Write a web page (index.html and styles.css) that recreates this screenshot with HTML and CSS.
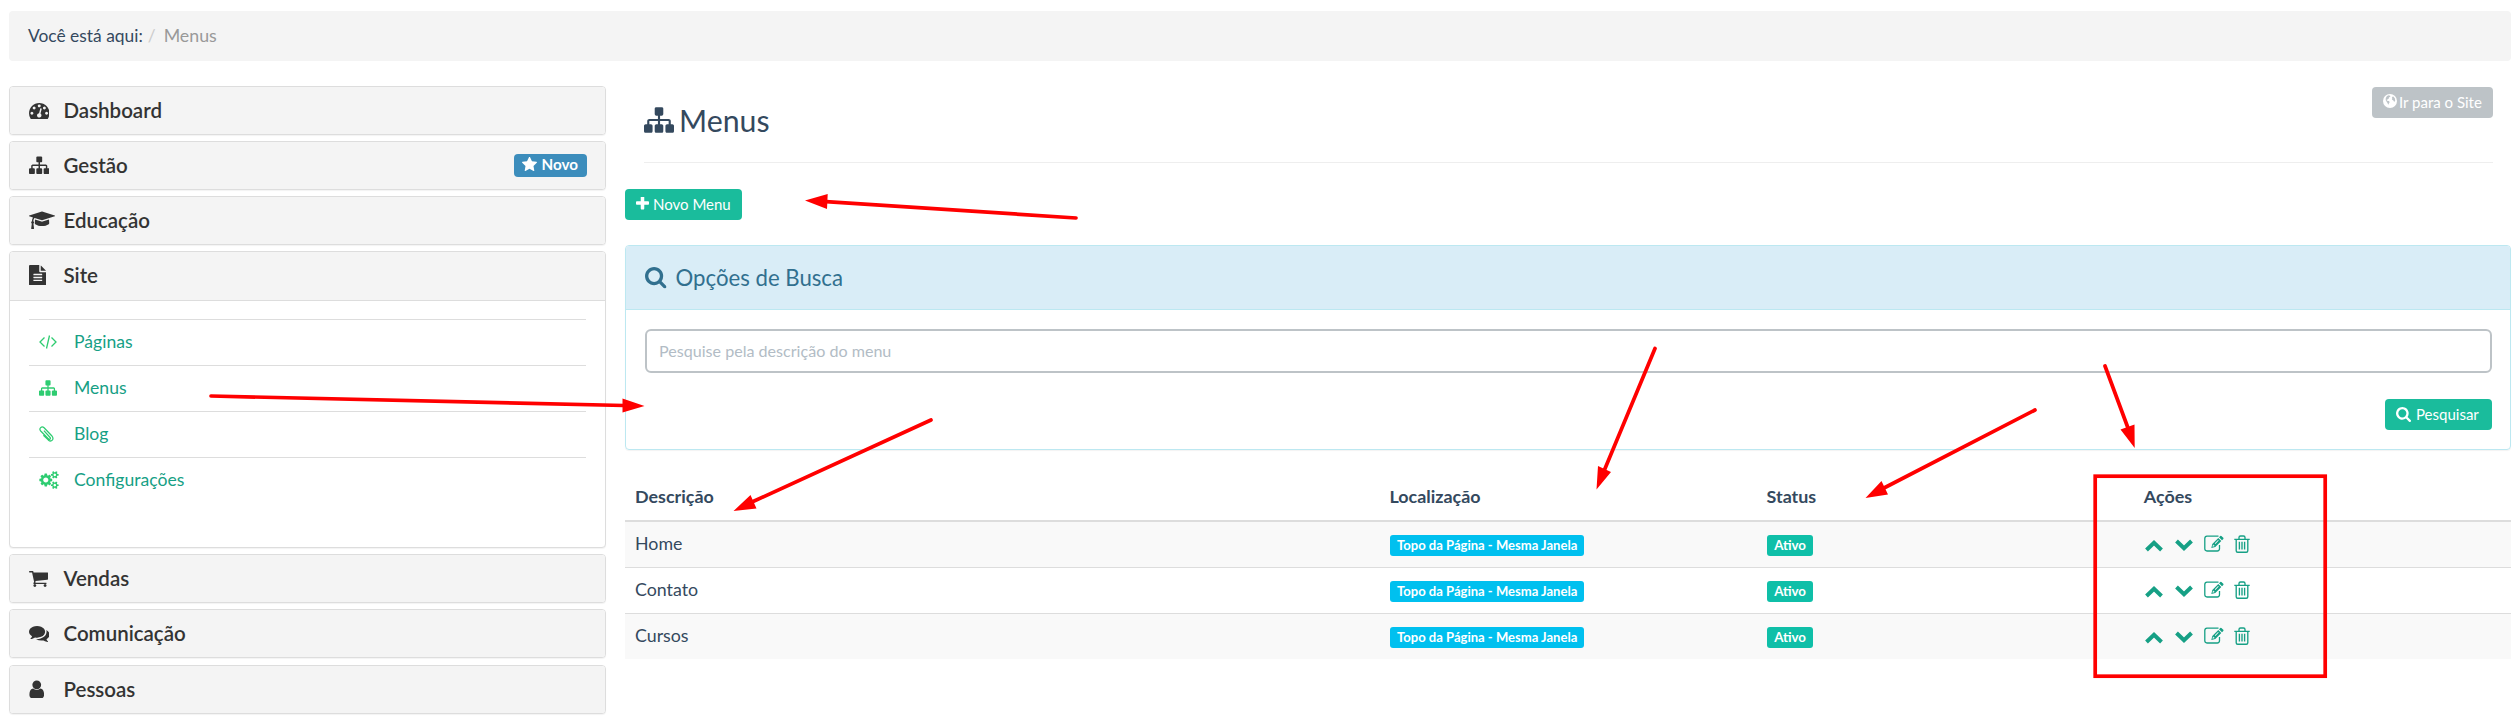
FILE: index.html
```html
<!DOCTYPE html>
<html lang="pt-BR">
<head>
<meta charset="utf-8">
<title>Menus</title>
<link rel="stylesheet" href="styles.css">
</head>
<body>
<svg class="sprite" aria-hidden="true">
  <symbol id="sitemap" viewBox="0 0 1792 1792"><path d="M1792 1248v320q0 40-28 68t-68 28h-320q-40 0-68-28t-28-68v-320q0-40 28-68t68-28h96v-192h-512v192h96q40 0 68 28t28 68v320q0 40-28 68t-68 28h-320q-40 0-68-28t-28-68v-320q0-40 28-68t68-28h96v-192h-512v192h96q40 0 68 28t28 68v320q0 40-28 68t-68 28h-320q-40 0-68-28t-28-68v-320q0-40 28-68t68-28h96v-192q0-52 38-90t90-38h512v-192h-96q-40 0-68-28t-28-68v-320q0-40 28-68t68-28h320q40 0 68 28t28 68v320q0 40-28 68t-68 28h-96v192h512q52 0 90 38t38 90v192h96q40 0 68 28t28 68z"/></symbol>
  <symbol id="gauge" viewBox="0 0 1792 1792"><path d="M384 1152q0-53-37.500-90.500t-90.500-37.500-90.500 37.500-37.500 90.500 37.500 90.500 90.500 37.500 90.500-37.500 37.500-90.500zm192-448q0-53-37.500-90.500t-90.500-37.500-90.500 37.500-37.500 90.500 37.500 90.500 90.500 37.500 90.500-37.500 37.500-90.500zm428 481l101-382q6-26-7.500-48.500t-38.500-29.500-48 6.500-30 39.500l-101 382q-60 5-107 43.500t-63 98.500q-20 77 20 146t117 89 146-20 89-117q16-60-6-117t-72-91zm660-33q0-53-37.500-90.500t-90.500-37.500-90.500 37.500-37.500 90.500 37.500 90.500 90.500 37.500 90.500-37.500 37.500-90.500zm-640-640q0-53-37.500-90.500t-90.500-37.500-90.500 37.500-37.500 90.500 37.500 90.500 90.500 37.500 90.500-37.500 37.500-90.500zm448 192q0-53-37.500-90.500t-90.500-37.500-90.500 37.500-37.500 90.500 37.500 90.500 90.500 37.500 90.500-37.500 37.500-90.500zm320 448q0 261-141 483-19 29-54 29h-1402q-35 0-54-29-141-221-141-483 0-182 71-348t191-286 286-191 348-71 348 71 286 191 191 286 71 348z"/></symbol>
  <symbol id="cap" viewBox="0 0 2304 1792"><path d="M1774 836l18 316q4 69-82 128t-235 93.500-323 34.500-323-34.500-235-93.500-82-128l18-316 574 181q22 7 48 7t48-7zm530-324q0 23-22 31l-1120 352q-4 1-10 1t-10-1l-652-206q-43 34-71 111.500t-34 178.500q63 36 63 109 0 69-58 107l58 433q2 14-8 25-9 11-24 11h-192q-15 0-24-11-10-11-8-25l58-433q-58-38-58-107 0-73 65-111 11-207 98-330l-333-104q-22-8-22-31t22-31l1120-352q4-1 10-1t10 1l1120 352q22 8 22 31z"/></symbol>
  <symbol id="file" viewBox="128 0 1536 1792"><path d="M1596 476q14 14 28 36h-472v-472q22 14 36 28zm-476 164h544v1056q0 40-28 68t-68 28h-1344q-40 0-68-28t-28-68v-1600q0-40 28-68t68-28h800v544q0 40 28 68t68 28zm160 736v-64q0-14-9-23t-23-9h-704q-14 0-23 9t-9 23v64q0 14 9 23t23 9h704q14 0 23-9t9-23zm0-256v-64q0-14-9-23t-23-9h-704q-14 0-23 9t-9 23v64q0 14 9 23t23 9h704q14 0 23-9t9-23zm0-256v-64q0-14-9-23t-23-9h-704q-14 0-23 9t-9 23v64q0 14 9 23t23 9h704q14 0 23-9t9-23z"/></symbol>
  <symbol id="cart" viewBox="64 0 1664 1792"><path d="M704 1536q0 52-38 90t-90 38-90-38-38-90 38-90 90-38 90 38 38 90zm896 0q0 52-38 90t-90 38-90-38-38-90 38-90 90-38 90 38 38 90zm128-1088v512q0 24-16.500 42.500t-40.500 21.500l-1044 122q13 60 13 70 0 16-24 64h920q26 0 45 19t19 45-19 45-45 19h-1024q-26 0-45-19t-19-45q0-11 8-31.500t16-36 21.500-40 15.500-29.500l-177-823h-204q-26 0-45-19t-19-45 19-45 45-19h256q16 0 28.500 6.500t19.500 15.500 13 24.500 8 26 5.500 29.500 4.500 26h1201q26 0 45 19t19 45z"/></symbol>
  <symbol id="comments" viewBox="0 0 1792 1792"><path d="M1408 768q0 139-94 257t-256.500 186.500-353.500 68.500q-86 0-176-16-124 88-278 128-36 9-86 16h-3q-11 0-20.500-8t-11.500-21q-1-3-1-6.500t.5-6.500 2-6l2.500-5 3.500-5.500 4-5 4.500-5 4-4.500q5-6 23-25t26-29.500 22.500-29 25-38.500 20.500-44q-124-72-195-177t-71-224q0-139 94-257t256.500-186.500 353.500-68.500 353.500 68.500 256.500 186.500 94 257zm384 256q0 120-71 224.500t-195 176.500q10 24 20.500 44t25 38.500 22.500 29 26 29.500 23 25q1 1 4 4.500t4.500 5 4 5 3.500 5.500l2.500 5 2 6 .5 6.500-1 6.500q-3 14-13 22t-22 7q-50-7-86-16-154-40-278-128-90 16-176 16-271 0-472-132 58 4 88 4 161 0 309-45t264-129q125-92 192-212t67-254q0-77-23-152 129 71 204 178t75 230z"/></symbol>
  <symbol id="user" viewBox="256 0 1280 1792"><path d="M1536 1399q0 109-62.500 187t-150.500 78h-854q-88 0-150.500-78t-62.500-187q0-85 8.500-160.500t31.500-152 58.500-131 94-89 134.500-34.500q131 128 313 128t313-128q76 0 134.500 34.500t94 89 58.500 131 31.500 152 8.500 160.500zm-256-887q0 159-112.500 271.500t-271.500 112.500-271.500-112.500-112.500-271.500 112.500-271.500 271.500-112.500 271.500 112.500 112.500 271.500z"/></symbol>
  <symbol id="star" viewBox="64 64 1664 1664"><path d="M1728 647q0 22-26 48l-363 354 86 500q1 7 1 20 0 21-10.500 35.500t-30.500 14.500q-19 0-40-12l-449-236-449 236q-22 12-40 12-21 0-31.500-14.500t-10.500-35.500q0-6 2-20l86-500-364-354q-25-27-25-48 0-37 56-46l502-73 225-455q19-41 49-41t49 41l225 455 502 73q56 9 56 46z"/></symbol>
  <symbol id="plus" viewBox="192 192 1408 1408"><path d="M1600 736v192q0 40-28 68t-68 28h-416v416q0 40-28 68t-68 28h-192q-40 0-68-28t-28-68v-416h-416q-40 0-68-28t-28-68v-192q0-40 28-68t68-28h416v-416q0-40 28-68t68-28h192q40 0 68 28t28 68v416h416q40 0 68 28t28 68z"/></symbol>
  <symbol id="search" viewBox="64 128 1664 1664"><path d="M1216 832q0-185-131.500-316.500t-316.500-131.500-316.500 131.500-131.500 316.500 131.500 316.500 316.500 131.500 316.500-131.500 131.500-316.500zm512 832q0 52-38 90t-90 38q-54 0-90-38l-343-342q-179 124-399 124-143 0-273.500-55.500t-225-150-150-225-55.500-273.500 55.500-273.500 150-225 225-150 273.500-55.500 273.500 55.500 225 150 150 225 55.500 273.500q0 220-124 399l343 343q37 37 37 90z"/></symbol>
  <symbol id="cogs" viewBox="0 0 1920 1792"><path d="M896 896q0-106-75-181t-181-75-181 75-75 181 75 181 181 75 181-75 75-181zm768 512q0-52-38-90t-90-38-90 38-38 90q0 53 37.500 90.500t90.500 37.500 90.500-37.500 37.500-90.500zm0-1024q0-52-38-90t-90-38-90 38-38 90q0 53 37.500 90.500t90.500 37.500 90.500-37.500 37.500-90.500zm-384 421v185q0 10-7 19.500t-16 10.500l-155 24q-11 35-32 76 34 48 90 115 7 11 7 20 0 12-7 19-23 30-82.500 89.500t-78.500 59.500q-11 0-21-7l-115-90q-37 19-77 31-11 108-23 155-7 24-30 24h-186q-11 0-20-7.500t-10-17.500l-23-153q-34-10-75-31l-118 89q-7 7-20 7-11 0-21-8-144-133-144-160 0-9 7-19 10-14 41-53t47-61q-23-44-35-82l-152-24q-10-1-17-9.500t-7-19.500v-185q0-10 7-19.500t16-10.500l155-24q11-35 32-76-34-48-90-115-7-11-7-20 0-12 7-20 22-30 82-89t79-59q11 0 21 7l115 90q34-18 77-32 11-108 23-154 7-24 30-24h186q11 0 20 7.500t10 17.500l23 153q34 10 75 31l118-89q8-7 20-7 11 0 21 8 144 133 144 160 0 8-7 19-12 16-42 54t-45 60q23 48 34 82l152 23q10 2 17 10.500t7 19.500zm640 533v140q0 16-149 31-12 27-30 52 51 113 51 138 0 4-4 7-122 71-124 71-8 0-46-47t-52-68q-20 2-30 2t-30-2q-14 21-52 68t-46 47q-2 0-124-71-4-3-4-7 0-25 51-138-18-25-30-52-149-15-149-31v-140q0-16 149-31 13-29 30-52-51-113-51-138 0-4 4-7 4-2 35-20t59-34 30-16q8 0 46 46.500t52 67.500q20-2 30-2t30 2q51-71 92-112l6-2q4 0 124 70 4 3 4 7 0 25-51 138 17 23 30 52 149 15 149 31zm0-1024v140q0 16-149 31-12 27-30 52 51 113 51 138 0 4-4 7-122 71-124 71-8 0-46-47t-52-68q-20 2-30 2t-30-2q-14 21-52 68t-46 47q-2 0-124-71-4-3-4-7 0-25 51-138-18-25-30-52-149-15-149-31v-140q0-16 149-31 13-29 30-52-51-113-51-138 0-4 4-7 4-2 35-20t59-34 30-16q8 0 46 46.500t52 67.500q20-2 30-2t30 2q51-71 92-112l6-2q4 0 124 70 4 3 4 7 0 25-51 138 17 23 30 52 149 15 149 31z"/></symbol>
  <symbol id="code" viewBox="0 0 18 18"><path d="M5.500 4.500L1 9l4.500 4.500M12.500 4.500L17 9l-4.500 4.500M10.500 2.500l-3 13" fill="none" stroke="currentColor" stroke-width="1.300"/></symbol>
  <symbol id="clip" viewBox="0 0 18 18"><path d="M5.500 5.500l6 6.500c1.300 1.300-.3 2.900-1.600 1.600L2.300 5.800C.2 3.400 3.200.2 5.700 2.500l7.600 8c3 3.500-.3 6.900-3.500 4.200L5 10" fill="none" stroke="currentColor" stroke-width="1.250" transform="translate(-.6 .2)"/></symbol>
  <symbol id="globe" viewBox="0 0 14 14"><path fill-rule="evenodd" d="M7 0a7 7 0 1 0 0 14A7 7 0 0 0 7 0zM4 2l1.800-.7 1.700.6-.6 1.200-1.100.4.200.8-1.500 1.300-.9.200.5.900 1.700.4.900 1-.8 1.500-.7 1.200-.7-1.700-1-1.500-.8-1.500.1-2zM8.800 3l1.500-.6 1.500 1.800.4 2.200-1 1.700-.8-1.700-1.500-.8.400-1.600z"/></symbol>
  <symbol id="up" viewBox="0 0 18 13"><path d="M1.500 11L9 3.800l7.500 7.200" fill="none" stroke="currentColor" stroke-width="4"/></symbol>
  <symbol id="down" viewBox="0 0 18 13"><path d="M1.500 2L9 9.200 16.500 2" fill="none" stroke="currentColor" stroke-width="4"/></symbol>
  <symbol id="edit" viewBox="0 0 20 18"><path d="M14.500 1.200H3A2.300 2.300 0 0 0 .8 3.400v10.400A2.300 2.300 0 0 0 3 16h10.200a2.300 2.300 0 0 0 2.300-2.200V10" fill="none" stroke="currentColor" stroke-width="1.300"/><path fill-rule="evenodd" d="M7.300 12.900l1-4 6-6 3 3-6 6zM8.900 10l-.4 1.700 1.800-.4.300-.8-.9.100.1-.8zM10.800 8.300l.6.600 3.300-3.300-.6-.6zM15 2.200l1.300-1.300q.5-.5 1.100 0l1.900 1.800q.5.600 0 1.200L18 5.200z"/></symbol>
  <symbol id="trash" viewBox="0 0 16 18"><path d="M.3 4.300h15.400M5 4V2.500Q5 1 6.500 1h3Q11 1 11 2.500V4M2.200 4.500v11.200q0 1.500 1.500 1.500h8.600q1.500 0 1.500-1.500V4.500M5.400 6.700v7.800M8 6.700v7.800M10.600 6.700v7.800" fill="none" stroke="currentColor" stroke-width="1.350"/></symbol>
</svg>

<nav class="breadcrumb"><span>Você está aqui:</span><span class="sep">/</span><span class="current">Menus</span></nav>

<div class="layout">
  <aside class="sidebar">
    <section class="box"><h4><span class="slot"><svg class="i20"><use href="#gauge"/></svg></span>Dashboard</h4></section>
    <section class="box"><h4><span class="slot"><svg class="i20"><use href="#sitemap"/></svg></span>Gestão<span class="badge"><svg><use href="#star"/></svg>Novo</span></h4></section>
    <section class="box"><h4><span class="slot"><svg class="i20 wide"><use href="#cap"/></svg></span>Educação</h4></section>
    <section class="box open"><h4><span class="slot"><svg class="i20 file"><use href="#file"/></svg></span>Site</h4>
      <ul class="links">
        <li><span class="slot"><svg><use href="#code"/></svg></span>Páginas</li>
        <li><span class="slot"><svg><use href="#sitemap"/></svg></span>Menus</li>
        <li><span class="slot"><svg><use href="#clip"/></svg></span>Blog</li>
        <li><span class="slot"><svg class="cogs"><use href="#cogs"/></svg></span>Configurações</li>
      </ul>
    </section>
    <section class="box"><h4><span class="slot"><svg class="i20 cart"><use href="#cart"/></svg></span>Vendas</h4></section>
    <section class="box"><h4><span class="slot"><svg class="i20"><use href="#comments"/></svg></span>Comunicação</h4></section>
    <section class="box last"><h4><span class="slot"><svg class="i20 user"><use href="#user"/></svg></span>Pessoas</h4></section>
  </aside>

  <main class="content">
    <header class="page-header">
      <h1><svg><use href="#sitemap"/></svg>Menus</h1>
      <a class="btn muted"><svg class="globe"><use href="#globe"/></svg>Ir para o Site</a>
    </header>
    <a class="btn new"><svg class="plus"><use href="#plus"/></svg>Novo Menu</a>

    <section class="panel">
      <h3><svg><use href="#search"/></svg>Opções de Busca</h3>
      <div class="panel-body">
        <input type="text" placeholder="Pesquise pela descrição do menu">
        <a class="btn find"><svg><use href="#search"/></svg>Pesquisar</a>
      </div>
    </section>

    <table>
      <thead><tr><th class="c40">Descrição</th><th class="c20">Localização</th><th class="c20">Status</th><th class="c20">Ações</th></tr></thead>
      <tbody>
        <tr><td>Home</td><td><span class="label info">Topo da Página - Mesma Janela</span></td><td><span class="label ok">Ativo</span></td><td><div class="actions"><svg class="chev"><use href="#up"/></svg><svg class="chev dn"><use href="#down"/></svg><svg class="edit"><use href="#edit"/></svg><svg class="trash"><use href="#trash"/></svg></div></td></tr>
        <tr><td>Contato</td><td><span class="label info">Topo da Página - Mesma Janela</span></td><td><span class="label ok">Ativo</span></td><td><div class="actions"><svg class="chev"><use href="#up"/></svg><svg class="chev dn"><use href="#down"/></svg><svg class="edit"><use href="#edit"/></svg><svg class="trash"><use href="#trash"/></svg></div></td></tr>
        <tr><td>Cursos</td><td><span class="label info">Topo da Página - Mesma Janela</span></td><td><span class="label ok">Ativo</span></td><td><div class="actions"><svg class="chev"><use href="#up"/></svg><svg class="chev dn"><use href="#down"/></svg><svg class="edit"><use href="#edit"/></svg><svg class="trash"><use href="#trash"/></svg></div></td></tr>
      </tbody>
    </table>
  </main>
</div>

<svg class="marks" viewBox="0 0 2520 728">
  <path class="shaft" d="M1076 218L826 201.700M211 396L624 405.500M931 420L752 502M1655 348.500L1604 471M2105 366L2128 428M2035 410L1884 488"/>
  <path class="head" d="M805 200.500l22.700-6.500-.7 15zM644.500 406l-22-7.500v14zM733.500 511l17-16 6 13.500zM1596.500 489.500l1.500-23.500 13 6zM2134.700 448l-14.200-18.500 14-5zM1865.500 498l16-17 6.500 13.500z"/>
  <rect class="frame" x="2095.200" y="476.200" width="230" height="200"/>
</svg>
</body>
</html>
```
FILE: styles.css
```css
* { box-sizing: border-box; }
body {
  margin: 0;
  padding: 11px 9px 0;
  height: 728px;
  overflow: hidden;
  position: relative;
  font: 17.4px/29px Lato, "Open Sans", sans-serif;
  color: #34495e;
  background: #fff;
}
svg { display: block; flex: none; fill: currentColor; }
.sprite { display: none; }
h1, h3, h4, ul { margin: 0; padding: 0; font-weight: 400; }

.breadcrumb {
  display: flex;
  height: 50px;
  padding: 10px 19px;
  border-radius: 4px;
  background: #f4f4f4;
}
.sep { padding: 0 8px 0 5px; color: #ccc; }
.current { color: #999; font-size: 17.8px; }

.layout { display: flex; gap: 19px; padding-top: 25px; }

.sidebar { width: 597px; display: flex; flex-direction: column; gap: 6px; }
.box {
  height: 49px;
  border: 1px solid #ddd;
  border-radius: 4px;
  box-shadow: 0 1px 1px rgba(0, 0, 0, .05);
  background: #fff;
  overflow: hidden;
}
.box.open { height: 297px; }
.box.last { margin-top: 1px; }
.box h4 {
  display: flex;
  align-items: center;
  height: 48px;
  padding: 0 18px 2px 18.500px;
  font-size: 20.5px;
  font-weight: 600;
  color: #333;
  background: #f4f4f4;
}
.box.open h4 { height: 49px; border-bottom: 1px solid #ddd; }
.box .slot { width: 35px; flex: none; }
.i20 { width: 20.5px; height: 20.5px; }
.i20.wide { width: 26px; }
.i20.file { width: 17.6px; }
.i20.cart { width: 19px; }
.i20.user { width: 15.5px; }
.badge {
  display: flex;
  align-items: center;
  gap: 5px;
  margin-left: auto;
  height: 23px;
  padding: 0 9px 1px 8px;
  border-radius: 4px;
  background: #3c8dbc;
  color: #fff;
  font-size: 15.2px;
  font-weight: 700;
}
.badge svg { width: 15px; height: 15px; }
.links { list-style: none; margin: 18px 19px 0; }
.links li {
  display: flex;
  align-items: center;
  height: 46px;
  padding-left: 9.500px;
  padding-bottom: 2px;
  border-top: 1px solid #ddd;
  font-size: 17.6px;
  color: #16a085;
}
.links .slot { width: 35.500px; color: #2ecc71; }
.links svg { width: 18px; height: 18px; }
.links .cogs { width: 20px; }

.content { width: 1886px; }
.page-header {
  display: flex;
  justify-content: space-between;
  align-items: flex-start;
  height: 77px;
  margin: 0 18px 26px 19px;
  border-bottom: 1px solid #eee;
}
h1 { display: flex; align-items: center; gap: 5px; padding-top: 14px; font-size: 30.3px; line-height: 40px; }
h1 svg { width: 30px; height: 30px; }
.btn {
  display: flex;
  align-items: center;
  height: 31px;
  padding: 0 0 1px 11px;
  border-radius: 4px;
  background: #1abc9c;
  color: #fff;
  font-size: 15px;
  white-space: nowrap;
}
.btn.muted { width: 121px; margin-top: 1px; background: #bdc3c7; }
.btn .globe { width: 14px; height: 14px; margin: -2px 2px 0 0; }
.btn .plus { width: 13px; height: 13px; margin: -1px 4px 0 0; }
.btn.new { width: 117px; }
.btn.find { width: 107px; }
.find svg { width: 15px; height: 15px; margin-right: 5px; }

.panel {
  height: 205px;
  margin-top: 25px;
  border: 1px solid #bce8f1;
  border-radius: 4px;
  box-shadow: 0 1px 1px rgba(0, 0, 0, .05);
  overflow: hidden;
}
.panel h3 {
  display: flex;
  align-items: center;
  gap: 9px;
  height: 64px;
  padding: 0 19px;
  border-bottom: 1px solid #bce8f1;
  background: #d9edf7;
  color: #31708f;
  font-size: 22.2px;
}
.panel h3 svg { width: 21.5px; height: 21.5px; margin-top: 1px; }
.panel-body { display: flex; flex-direction: column; align-items: flex-end; gap: 26px; padding: 19px 18px 0 19px; }
input {
  width: 100%;
  height: 44px;
  padding: 0 12px 2px;
  border: 2px solid #bdc3c7;
  border-radius: 6px;
  background: #fff;
  font: 16.1px Lato, sans-serif;
  outline: 0;
}
input::placeholder { color: #b2bcc5; opacity: 1; }

table { width: 100%; margin-top: 19px; border-collapse: separate; border-spacing: 0; table-layout: fixed; }
.c40 { width: 40%; }
.c20 { width: 20%; }
th { height: 53px; padding: 3px 10px 0; border-bottom: 2px solid #ddd; text-align: left; font-size: 17.9px; font-weight: 700; }
td { height: 46px; padding: 0 10px 2px; border-top: 1px solid #ddd; font-size: 17.8px; vertical-align: middle; }
tbody tr:first-child td { height: 45px; border-top: 0; }
tbody tr:nth-child(odd) { background: #f9f9f9; }
.label {
  display: flex;
  width: max-content;
  height: 21px;
  margin: 4px 0 0 .6px;
  padding: 0 7px;
  border-radius: 3px;
  line-height: 20px;
  font-size: 13.050px;
  font-weight: 700;
  color: #fff;
}
.info { background: #00c0ef; }
.ok { background: #0fbfa8; font-size: 13.300px; }
.actions { display: flex; align-items: flex-start; padding-left: 1px; color: #16a085; }
.chev { width: 18px; height: 13px; margin-top: 4px; }
.dn { margin-left: 12.500px; }
.edit { width: 20px; height: 18px; margin-left: 10.500px; }
.trash { width: 16px; height: 18px; margin-left: 10.500px; }

.marks { position: absolute; left: 0; top: 0; width: 2520px; height: 728px; pointer-events: none; }
.shaft { fill: none; stroke: #f00; stroke-width: 3.7; stroke-linecap: round; }
.head { fill: #f00; }
.frame { fill: none; stroke: #f00; stroke-width: 3.7; }
```
